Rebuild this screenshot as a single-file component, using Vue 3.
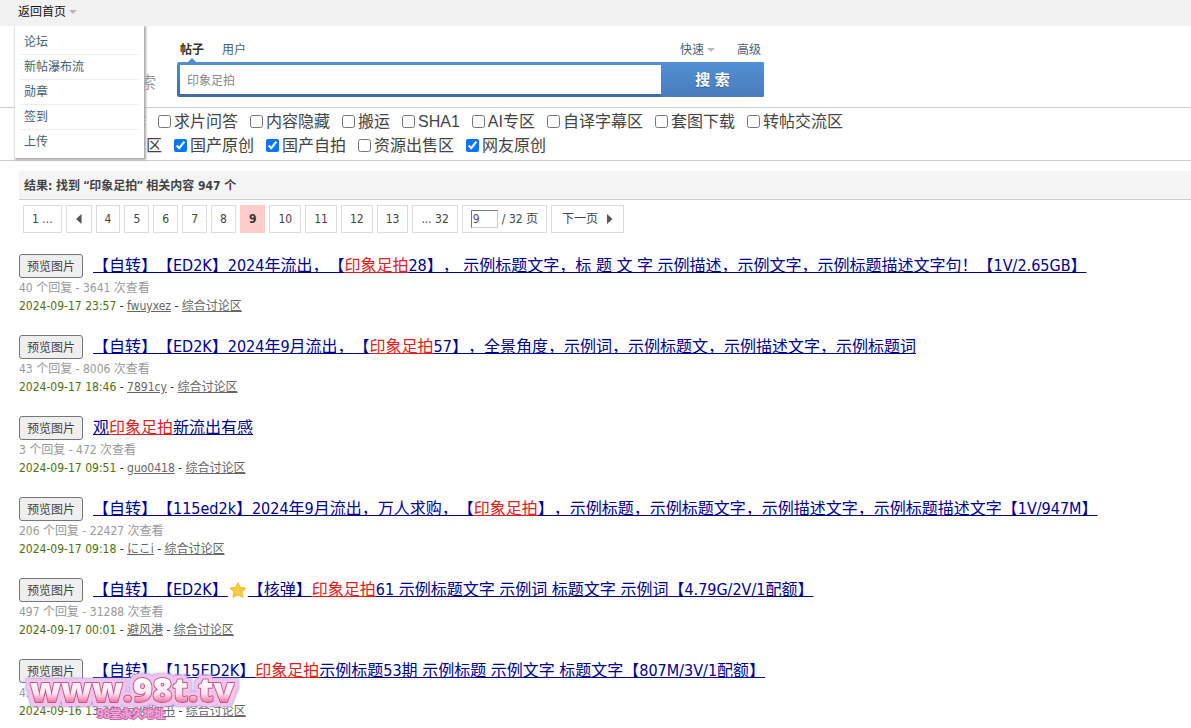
<script setup>
import { ref } from 'vue'

const menu = ['论坛', '新帖瀑布流', '勋章', '签到', '上传']
const keyword = ref('印象足拍')
const jump = ref('9')

const forums = ref([
  [
    { name: '网友求助与合作', on: false },
    { name: '求片问答', on: false },
    { name: '内容隐藏', on: false },
    { name: '搬运', on: false },
    { name: 'SHA1', on: false },
    { name: 'AI专区', on: false },
    { name: '自译字幕区', on: false },
    { name: '套图下载', on: false },
    { name: '转帖交流区', on: false },
  ],
  [
    { name: '资源综合讨论分区', on: false },
    { name: '国产原创', on: true },
    { name: '国产自拍', on: true },
    { name: '资源出售区', on: false },
    { name: '网友原创', on: true },
  ],
])

const pagesBefore = ['4', '5', '6', '7', '8']
const pagesAfter = ['10', '11', '12', '13', '... 32']

const results = [
  {
    before: '【自转】【ED2K】2024年流出，【',
    after: '28】， 示例标题文字，标 题 文 字 示例描述，示例文字，示例标题描述文字句！【1V/2.65GB】',
    replies: 40, views: 3641, date: '2024-09-17 23:57', author: 'fwuyxez',
  },
  {
    before: '【自转】【ED2K】2024年9月流出，【',
    after: '57】，全景角度，示例词，示例标题文，示例描述文字，示例标题词',
    replies: 43, views: 8006, date: '2024-09-17 18:46', author: '7891cy',
  },
  {
    before: '观', after: '新流出有感',
    replies: 3, views: 472, date: '2024-09-17 09:51', author: 'guo0418',
  },
  {
    before: '【自转】【115ed2k】2024年9月流出，万人求购，【',
    after: '】，示例标题，示例标题文字，示例描述文字，示例标题描述文字【1V/947M】',
    replies: 206, views: 22427, date: '2024-09-17 09:18', author: 'にこi',
  },
  {
    before: '【自转】【ED2K】', star: true, tag: '【核弹】',
    after: '61 示例标题文字 示例词 标题文字 示例词【4.79G/2V/1配额】',
    replies: 497, views: 31288, date: '2024-09-17 00:01', author: '避风港',
  },
  {
    before: '【自转】【115ED2K】',
    after: '示例标题53期 示例标题 示例文字 标题文字【807M/3V/1配额】',
    replies: 433, views: 25210, date: '2024-09-16 13:20', author: '示例图书',
  },
]
</script>

<template>
  <div class="page">
    <header class="topbar">
      <div class="home">
        <a href="#">返回首页</a><i class="caret"></i>
        <nav class="menu">
          <a v-for="m in menu" :key="m" href="#">{{ m }}</a>
        </nav>
      </div>
    </header>

    <section class="search">
      <div class="logo">搜索</div>
      <form class="searchform" @submit.prevent>
        <div class="tabs">
          <a class="current" href="#">帖子</a>
          <a href="#">用户</a>
          <span class="spacer"></span>
          <a class="quick" href="#">快速<i class="caret"></i></a>
          <a href="#">高级</a>
        </div>
        <div class="bar">
          <input v-model="keyword" type="text" aria-label="搜索关键词" />
          <button type="submit">搜 索</button>
        </div>
      </form>
    </section>

    <section class="forums">
      <div v-for="(row, i) in forums" :key="i" class="row">
        <label v-for="f in row" :key="f.name"><input v-model="f.on" type="checkbox" />{{ f.name }}</label>
      </div>
    </section>

    <main>
      <h2>结果: 找到 <span>“印象足拍”</span> 相关内容 947 个</h2>

      <nav class="pager">
        <a href="#">1 ...</a>
        <a href="#" aria-label="上一页"><svg width="8" height="10" viewBox="0 0 8 10"><path d="M6.5 0v10L1 5z" fill="#555" /></svg></a>
        <a v-for="p in pagesBefore" :key="p" href="#">{{ p }}</a>
        <strong>9</strong>
        <a v-for="p in pagesAfter" :key="p" href="#">{{ p }}</a>
        <label><input v-model="jump" type="text" aria-label="页码" /><span>/ 32 页</span></label>
        <a class="next" href="#">下一页<svg width="6" height="10" viewBox="0 0 6 10"><path d="M0 0v10L5.5 5z" fill="#555" /></svg></a>
      </nav>

      <ul class="results">
        <li v-for="r in results" :key="r.date">
          <div class="head">
            <button type="button">预览图片</button>
            <a href="#">{{ r.before }}<svg v-if="r.star" class="star" width="18" height="16" viewBox="0 0 18 16"><path d="M9 .5l2.4 4.9 5.6.7-4.1 3.8 1.1 5.6L9 12.8l-5 2.7 1.1-5.6L1 6.1l5.6-.7z" fill="#fbcb3c" stroke="#f4b92c" stroke-linejoin="round" /></svg>{{ r.tag }}<em>印象足拍</em>{{ r.after }}</a>
          </div>
          <p class="count">{{ r.replies }} 个回复 - {{ r.views }} 次查看</p>
          <p class="meta"><span>{{ r.date }}</span> - <a href="#">{{ r.author }}</a> - <a href="#">综合讨论区</a></p>
        </li>
      </ul>
    </main>

    <svg class="watermark" width="220" height="60" viewBox="0 0 220 60" role="img" aria-label="www.98t.tv">
      <defs>
        <linearGradient id="wm" x1="0" y1="0" x2="0" y2="1">
          <stop offset="0.3" stop-color="#fff" />
          <stop offset="0.6" stop-color="#fde3ee" />
          <stop offset="0.8" stop-color="#f06c9f" />
        </linearGradient>
        <filter id="halo" x="-10%" y="-20%" width="120%" height="140%">
          <feMorphology in="SourceAlpha" operator="dilate" radius="4" result="wide" />
          <feGaussianBlur in="wide" stdDeviation="0.8" result="soft" />
          <feFlood flood-color="#b9a8ea" />
          <feComposite in2="soft" operator="in" result="outer" />
          <feMorphology in="SourceAlpha" operator="dilate" radius="3" result="near" />
          <feFlood flood-color="#f4c3ea" />
          <feComposite in2="near" operator="in" result="inner" />
          <feMerge>
            <feMergeNode in="outer" />
            <feMergeNode in="inner" />
            <feMergeNode in="SourceGraphic" />
          </feMerge>
        </filter>
      </defs>
      <text class="big" x="8" y="38" fill="url(#wm)" filter="url(#halo)">www.98t.tv</text>
      <text class="small" x="75" y="54">98堂永久地址</text>
    </svg>
  </div>
</template>

<style>
body {
  margin: 0;
  background: #fff;
}
</style>

<style scoped>
.page {
  position: relative;
  min-height: 100vh;
  overflow: hidden;
  font: 12px/18px "DejaVu Sans Condensed", "Noto Sans CJK SC", "Noto Sans CJK JP", sans-serif;
  color: #444;
  text-spacing-trim: space-all;
}
a {
  color: inherit;
  text-decoration: none;
}
input,
button {
  font-family: inherit;
  box-sizing: border-box;
}
.caret {
  display: inline-block;
  margin-left: 3px;
  border: 4px solid transparent;
  border-top-color: #b8b8b8;
  border-bottom: 0;
  vertical-align: 2px;
}
.topbar {
  height: 26px;
  padding-left: 15px;
  background: #f2f2f2;
}
.home {
  position: relative;
  width: max-content;
  padding-left: 3px;
  line-height: 24px;
  color: #111;
}
.menu {
  position: absolute;
  z-index: 2;
  top: 26px;
  left: 0;
  width: 119px;
  padding: 4px 5px;
  background: #fff;
  box-shadow: 1px 1px 2px 1px #aaa;
  clip-path: inset(0 -5px -5px -5px);
}
.menu a {
  display: block;
  padding-left: 4px;
  line-height: 24px;
  border-bottom: 1px solid #eee;
  color: #456074;
}
.menu a:last-child {
  border: 0;
}
.search {
  display: flex;
  height: 81px;
}
.logo {
  width: 53px;
  padding: 48px 0 0 124px;
  font-size: 16px;
  color: #999;
}
.searchform {
  width: 587px;
  padding-top: 15px;
}
.tabs {
  display: flex;
  gap: 18px;
  height: 21px;
  padding: 0 3px;
  color: #456078;
}
.tabs .current {
  position: relative;
  font-weight: bold;
  color: #333;
}
.tabs .current::after {
  content: "";
  position: absolute;
  left: 8px;
  top: 17px;
  border: 4px solid transparent;
  border-top: 0;
  border-bottom-color: #4f8ccc;
}
.spacer {
  flex: 1;
}
.quick {
  margin-right: 4px;
}
.bar {
  display: flex;
  height: 35px;
  padding: 3px 0 3px 3px;
  box-sizing: border-box;
  border-radius: 2px;
  background: linear-gradient(#5190d2, #416ba4);
}
.bar input {
  flex: 1;
  min-width: 0;
  padding: 0 7px;
  border: 0;
  background: #fff;
  font-size: 12px;
  color: #888;
}
.bar button {
  width: 103px;
  height: 35px;
  margin-top: -3px;
  padding: 0 0 2px;
  border: 0;
  border-radius: 0 2px 2px 0;
  background: linear-gradient(#5190d2, #4a7cbd);
  font-size: 15px;
  font-weight: bold;
  color: #fff;
  text-shadow: 0 1px 1px #36629a;
}
.forums {
  padding: 2px 0 2px 18px;
  border: 1px solid #ccc;
  border-width: 1px 0;
  font-family: "Liberation Sans", "Noto Sans CJK SC", sans-serif;
  font-size: 16px;
  line-height: 24px;
}
.row {
  display: flex;
  gap: 12px;
}
.row label {
  display: flex;
  align-items: center;
  white-space: nowrap;
}
.row input {
  width: 13px;
  height: 13px;
  margin: 0 3px 2px 0;
}
main {
  padding: 10px 0 0 19px;
}
h2 {
  box-sizing: border-box;
  height: 29px;
  margin: 0;
  padding: 1px 0 0 5px;
  border-bottom: 1px solid #cdcdcd;
  background: #f5f5f5;
  font-size: 12px;
  line-height: 27px;
}
h2 span {
  font-family: "Noto Sans", "Noto Sans CJK SC", sans-serif;
}
.pager {
  display: flex;
  gap: 4px;
  padding: 5px 4px 0;
}
.pager > * {
  display: flex;
  align-items: center;
  box-sizing: border-box;
  height: 28px;
  padding: 0 8px;
  border: 1px solid #ddd;
  white-space: nowrap;
}
.pager strong {
  border-color: #fcc;
  background: #fcc;
  color: #333;
}
.pager input {
  width: 27px;
  height: 18px;
  margin-right: 4px;
  padding: 0 1px;
  border: 1px solid #ccc;
  border-color: #777 #ccc #ccc #777;
  font-size: 12px;
  color: #555;
}
.pager .next {
  gap: 9px;
  padding: 0 10px;
}
.results {
  margin: 0;
  padding: 20px 0 0;
  list-style: none;
}
.results li {
  height: 81px;
}
.head {
  display: flex;
  align-items: center;
  gap: 10px;
  height: 26px;
}
.head button {
  flex: none;
  width: 64px;
  height: 24px;
  padding: 0 0 1px;
  border: 1px solid #767676;
  border-radius: 3px;
  background: #efefef;
  font-size: 12px;
  color: #444;
}
.head a {
  font-size: 16px;
  line-height: 24px;
  white-space: nowrap;
  color: #00008b;
  text-decoration: underline;
}
.head em {
  font-style: normal;
  color: #e02020;
  text-decoration: underline;
}
.star {
  margin: 0 1px;
  vertical-align: -3px;
}
.results p {
  margin: 0;
}
.count {
  color: #999;
}
.meta {
  color: #333;
}
.meta span {
  color: #4f6f10;
}
.meta a {
  color: #666;
  text-decoration: underline;
}
.watermark {
  position: absolute;
  left: 22px;
  top: 664px;
}
.big {
  font: 800 34px "Open Sans", "Noto Sans", sans-serif;
  stroke: #c4558c;
  stroke-width: 2px;
  stroke-linejoin: round;
  paint-order: stroke;
}
.small {
  font: bold 11px "Noto Sans CJK SC", sans-serif;
  fill: #f3a9d6;
  stroke: #c768ae;
  stroke-width: 2px;
  paint-order: stroke;
}
</style>
